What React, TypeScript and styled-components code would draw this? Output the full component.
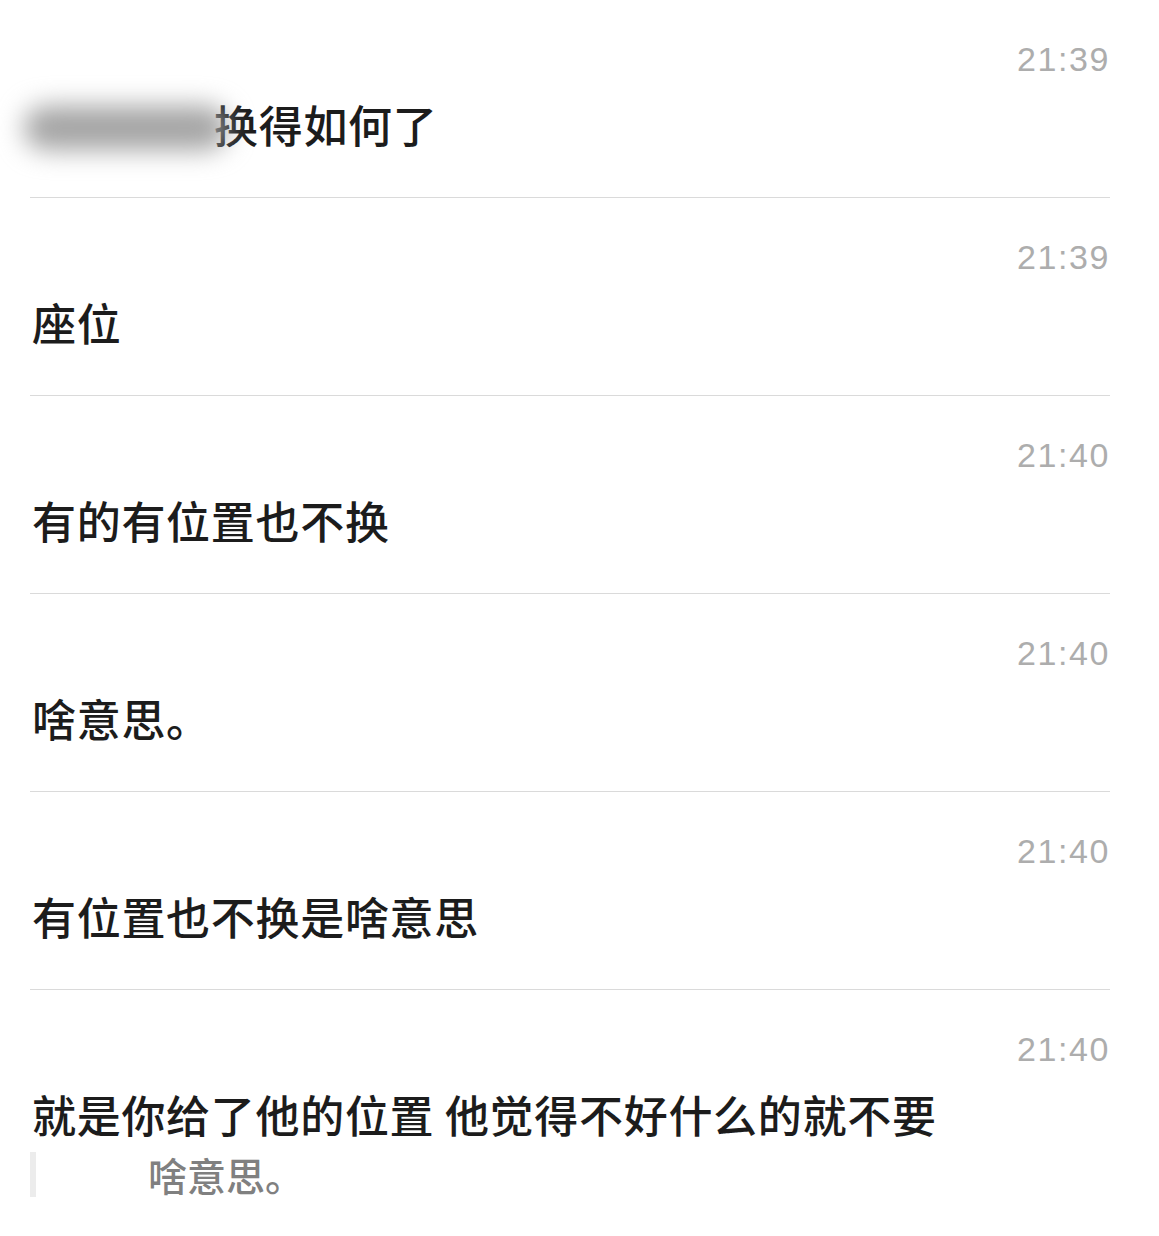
import styled, { createGlobalStyle } from 'styled-components';

const GlobalStyle = createGlobalStyle`
  html, body {
    margin: 0;
    padding: 0;
    background: #ffffff;
  }
  body {
    font-family: 'Noto Sans CJK SC', 'Noto Sans', sans-serif;
    color: #1c1c1c;
  }
`;

type Message = {
  time: string;
  text: string;
  quote?: string;
  hidden?: boolean;
};

const MESSAGES: Message[] = [
  { time: '21:39', text: '换得如何了', hidden: true },
  { time: '21:39', text: '座位' },
  { time: '21:40', text: '有的有位置也不换' },
  { time: '21:40', text: '啥意思。' },
  { time: '21:40', text: '有位置也不换是啥意思' },
  { time: '21:40', text: '就是你给了他的位置 他觉得不好什么的就不要', quote: '啥意思。' },
];

function App() {
  return (
    <>
      <GlobalStyle />
      <StyledList>
        {MESSAGES.map((m, i) => (
          <StyledRow key={i} $last={i === MESSAGES.length - 1}>
            <StyledTime>{m.time}</StyledTime>
            <StyledText>
              {m.hidden && <StyledBlur />}
              {m.text}
            </StyledText>
            {m.quote && <StyledQuote>{m.quote}</StyledQuote>}
          </StyledRow>
        ))}
      </StyledList>
    </>
  );
}

const StyledList = styled.div`
  display: flex;
  flex-direction: column;
  width: 1080px;
  margin-left: 30px;
`;

const StyledRow = styled.div<{ $last?: boolean }>`
  display: flex;
  flex-direction: column;
  box-sizing: border-box;
  min-height: 198px;
  padding-top: 42px;
  border-bottom: ${({ $last }) => ($last ? 'none' : '1px solid #dadada')};
`;

const StyledTime = styled.div`
  align-self: flex-end;
  font-family: 'Liberation Sans', Arial, sans-serif;
  font-size: 34px;
  line-height: 34px;
  letter-spacing: 1.6px;
  color: #adadad;
`;

const StyledText = styled.div`
  margin-top: 26px;
  padding-left: 2px;
  font-size: 44px;
  font-weight: 500;
  line-height: 44px;
  letter-spacing: 0.7px;
  white-space: nowrap;
`;

// blurred-out name in front of the first message
const StyledBlur = styled.span`
  position: relative;
  z-index: 1;
  display: inline-block;
  width: 204px;
  height: 44px;
  margin-left: -8px;
  margin-right: -14px;
  vertical-align: -7px;
  border-radius: 24px;
  background: #a4a4a4;
  filter: blur(13px);
`;

const StyledQuote = styled.div`
  margin-top: 16px;
  padding-left: 112px;
  border-left: 6px solid #ececec;
  font-size: 39px;
  font-weight: 500;
  line-height: 45px;
  color: #808080;
`;

export default App;
